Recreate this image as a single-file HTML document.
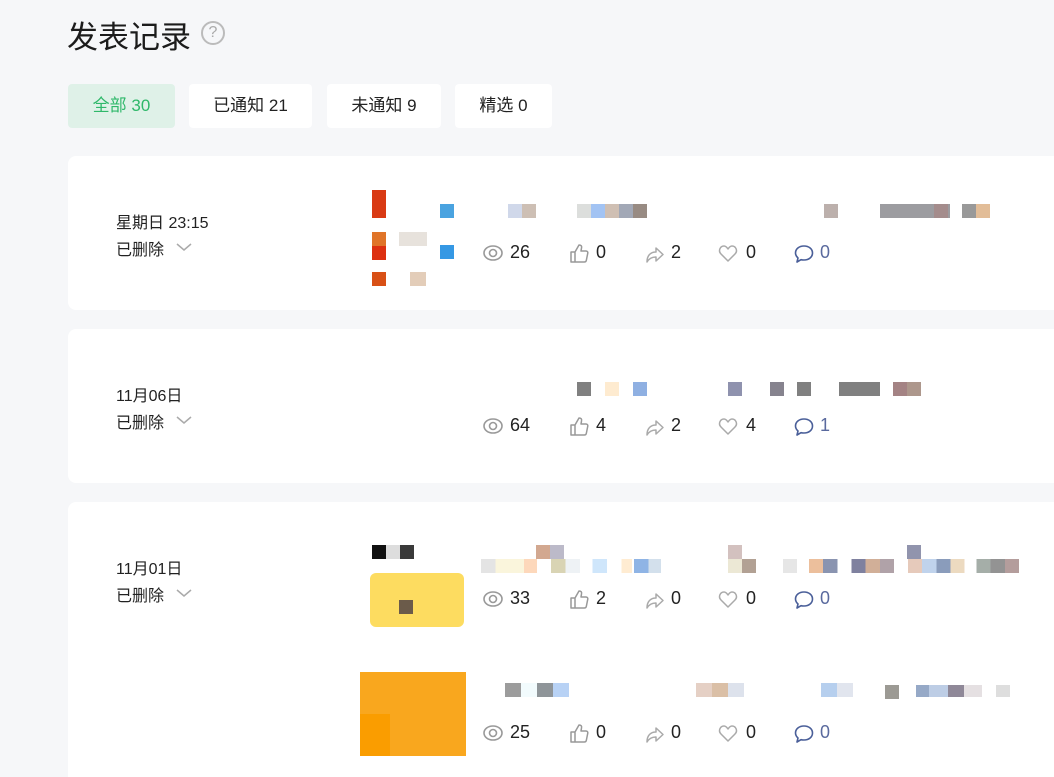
<!DOCTYPE html>
<html><head><meta charset="utf-8"><style>
*{margin:0;padding:0;box-sizing:border-box}
html,body{width:1054px;height:777px;overflow:hidden}
body{background:#f6f7f9;font-family:"Liberation Sans","Noto Sans CJK SC",sans-serif;color:#222;position:relative}
.a{position:absolute}
h1{position:absolute;left:67px;top:12px;font-size:31px;font-weight:400;color:#1c1c1c;letter-spacing:0px}
.q{position:absolute;left:201px;top:21px;width:24px;height:24px;border:2px solid #bbb;border-radius:50%;color:#aaa;font-size:16px;text-align:center;line-height:20px}
.tab{position:absolute;top:84px;height:44px;background:#fff;border-radius:4px;font-size:17px;text-align:center;line-height:44px;color:#222}
.card{position:absolute;left:68px;width:1000px;background:#fff;border-radius:8px}
.d{position:absolute;left:116px;font-size:16px;color:#222}
.del{position:absolute;left:116px;font-size:16px;color:#222}
.del svg{position:absolute;left:60px;top:6px}
.st{position:absolute;font-size:18px;color:#222}
.c{position:absolute;width:14px;height:14px}
</style></head><body>
<h1>发表记录</h1><div class="q">?</div>
<div class="tab" style="left:68px;width:107px;background:#dff1e8;color:#2fb86a">全部 30</div>
<div class="tab" style="left:189px;width:123px">已通知 21</div>
<div class="tab" style="left:327px;width:114px">未通知 9</div>
<div class="tab" style="left:455px;width:97px">精选 0</div>

<div class="card" style="top:156px;height:154px"></div>
<div class="card" style="top:329px;height:154px"></div>
<div class="card" style="top:502px;height:300px"></div>

<div class="d" style="top:209px">星期日 23:15</div>
<div class="del" style="top:236px">已删除<svg width="16" height="10"><path d="M1 2l7 6 7-6" fill="none" stroke="#aaa" stroke-width="1.5"/></svg></div>
<div class="d" style="top:382px">11月06日</div>
<div class="del" style="top:409px">已删除<svg width="16" height="10"><path d="M1 2l7 6 7-6" fill="none" stroke="#aaa" stroke-width="1.5"/></svg></div>
<div class="d" style="top:555px">11月01日</div>
<div class="del" style="top:582px">已删除<svg width="16" height="10"><path d="M1 2l7 6 7-6" fill="none" stroke="#aaa" stroke-width="1.5"/></svg></div>

<div class="a" style="left:372px;top:190px;width:14px;height:28px;background:#d93a14"></div>
<div class="a" style="left:372px;top:232px;width:14px;height:14px;background:#e07428"></div>
<div class="a" style="left:372px;top:246px;width:14px;height:14px;background:#dd3010"></div>
<div class="a" style="left:372px;top:272px;width:14px;height:14px;background:#d85016"></div>
<div class="a" style="left:440px;top:204px;width:14px;height:14px;background:#4aa3e0"></div>
<div class="a" style="left:440px;top:245px;width:14px;height:14px;background:#3598e4"></div>
<div class="a" style="left:399px;top:232px;width:28px;height:14px;background:#e7e2dc"></div>
<div class="a" style="left:410px;top:272px;width:16px;height:14px;background:#e3cdb9"></div>

<div class="a" style="left:372px;top:545px;width:14px;height:14px;background:#111"></div>
<div class="a" style="left:386px;top:545px;width:14px;height:14px;background:#ddd"></div>
<div class="a" style="left:400px;top:545px;width:14px;height:14px;background:#3a3a3a"></div>
<div class="a" style="left:370px;top:573px;width:94px;height:54px;background:#fddc60;border-radius:6px"></div>
<div class="a" style="left:399px;top:600px;width:14px;height:14px;background:#6b5b4a"></div>

<div class="a" style="left:360px;top:672px;width:106px;height:84px;background:#f9a71e"></div>
<div class="a" style="left:360px;top:714px;width:30px;height:42px;background:#fa9d00"></div>

<div class="c" style="left:508px;top:204px;background:#d0d8ea"></div>
<div class="c" style="left:522px;top:204px;background:#cdbfb4"></div>
<div class="c" style="left:577px;top:204px;background:#dcdedc"></div>
<div class="c" style="left:591px;top:204px;background:#a2c3f3"></div>
<div class="c" style="left:605px;top:204px;background:#cfbfb3"></div>
<div class="c" style="left:619px;top:204px;background:#a2a8b6"></div>
<div class="c" style="left:633px;top:204px;background:#988b83"></div>
<div class="c" style="left:824px;top:204px;background:#bcb0ac"></div>
<div class="a" style="left:880px;top:204px;width:70px;height:14px;background:#9c9ca0"></div>
<div class="c" style="left:934px;top:204px;background:#a48c8c"></div>
<div class="c" style="left:962px;top:204px;background:#999"></div>
<div class="c" style="left:976px;top:204px;background:#e2bd98"></div>

<div class="c" style="left:577px;top:382px;background:#808080"></div>
<div class="c" style="left:605px;top:382px;background:#feebd0"></div>
<div class="c" style="left:633px;top:382px;background:#8fb0e2"></div>
<div class="c" style="left:728px;top:382px;background:#8f92ae"></div>
<div class="c" style="left:770px;top:382px;background:#86838e"></div>
<div class="c" style="left:797px;top:382px;background:#808080"></div>
<div class="a" style="left:839px;top:382px;width:41px;height:14px;background:#808080"></div>
<div class="c" style="left:893px;top:382px;background:#a48384"></div>
<div class="c" style="left:907px;top:382px;background:#ad978c"></div>

<div class="c" style="left:536px;top:545px;background:#d2a890"></div>
<div class="c" style="left:550px;top:545px;background:#bcbac9"></div>
<div class="a" style="left:481px;top:559px;width:180px;height:14px;background:linear-gradient(90deg,#e4e4e4 8%,#faf5dc 8% 24%,#fdd8bb 24% 31%,#fff 31% 39%,#d9d4b4 39% 47%,#eef2f5 47% 55%,#fff 55% 62%,#cfe6fb 62% 70%,#fff 70% 78%,#ffecd2 78% 84%,#fff 84% 85%,#8fb4e5 85% 93%,#d3e0ec 93%)"></div>
<div class="c" style="left:728px;top:545px;background:#d3c1bf"></div>
<div class="c" style="left:728px;top:559px;background:#ece8d5"></div>
<div class="c" style="left:742px;top:559px;background:#b2a194"></div>
<div class="a" style="left:783px;top:559px;width:236px;height:14px;background:linear-gradient(90deg,#e6e6e6 6%,#fff 6% 11%,#ecbf9c 11% 17%,#8a94b0 17% 23%,#fff 23% 29%,#7f819f 29% 35%,#d1af98 35% 41%,#b0a2a8 41% 47%,#fff 47% 53%,#e6cabb 53% 59%,#c0d3ec 59% 65%,#8a9cbb 65% 71%,#ecdac0 71% 77%,#fff 77% 82%,#a5aea8 82% 88%,#939393 88% 94%,#b49d9c 94%)"></div>
<div class="c" style="left:907px;top:545px;background:#9194ad"></div>

<div class="a" style="left:505px;top:683px;width:64px;height:14px;background:linear-gradient(90deg,#9c9c9c 25%,#f2fbfd 25% 50%,#8f9599 50% 75%,#b8d2f5 75%)"></div>
<div class="a" style="left:696px;top:683px;width:64px;height:14px;background:linear-gradient(90deg,#e5d0c5 25%,#dabfa6 25% 50%,#dde2ec 50% 75%,#fff 75%)"></div>
<div class="a" style="left:821px;top:683px;width:32px;height:14px;background:linear-gradient(90deg,#b6cfee 50%,#e1e5ee 50%)"></div>
<div class="c" style="left:885px;top:685px;background:#9c9a94"></div>
<div class="a" style="left:916px;top:685px;width:94px;height:12px;background:linear-gradient(90deg,#96a9c7 14%,#bdcde5 14% 34%,#8f8898 34% 51%,#e5e0e2 51% 70%,#fff 70% 85%,#dedede 85%)"></div>

<svg width="0" height="0" style="position:absolute"><defs>
<g id="eye"><ellipse cx="10" cy="10" rx="9" ry="7" fill="none" stroke="#999" stroke-width="1.6"/><circle cx="10" cy="10" r="3.5" fill="none" stroke="#999" stroke-width="1.6"/></g>
<g id="like"><path d="M2 9h4v10H2zM6 9l4-7c2 0 3 1 2.5 3L12 8h5c1.2 0 2 1 1.8 2l-1.5 7.5c-.2 1-1 1.5-2 1.5H6" fill="none" stroke="#999" stroke-width="1.5" stroke-linejoin="round"/></g>
<g id="share"><path d="M3 19c0-7 4-10 9-10V5l7 6.5-7 6.5v-4c-4 0-7 1.5-9 5z" fill="none" stroke="#aaa" stroke-width="1.5" stroke-linejoin="round"/></g>
<g id="heart"><path d="M10 18L3 11C0 8 2 3 6 3c2 0 3 1.5 4 3 1-1.5 2-3 4-3 4 0 6 5 3 8z" fill="none" stroke="#aaa" stroke-width="1.5" stroke-linejoin="round"/></g>
<g id="cm"><path d="M10 3c5 0 8.5 3 8.5 7s-3.5 7-8.5 7c-1 0-2 0-3-.3L3 19l1-4C2.5 13.6 1.5 12 1.5 10 1.5 6 5 3 10 3z" fill="none" stroke="#4a5f99" stroke-width="1.6" stroke-linejoin="round"/></g>
</defs></svg>

<div id="rows"></div>
<script>
var rows=[[242,'26','0','2','0','0'],[415,'64','4','2','4','1'],[588,'33','2','0','0','0'],[722,'25','0','0','0','0']];
var h='';
rows.forEach(function(r){
 var y=r[0];
 var items=[[483,'eye',510,r[1]],[569,'like',596,r[2]],[644,'share',671,r[3]],[718,'heart',746,r[4]],[794,'cm',820,r[5]]];
 items.forEach(function(it){
  h+='<svg class="a" style="left:'+it[0]+'px;top:'+(y+1)+'px" width="21" height="21"><use href="#'+it[1]+'"/></svg>';
  h+='<div class="st" style="left:'+it[2]+'px;top:'+(y)+'px;'+(it[1]=='cm'?'color:#5a6a9e':'')+'">'+it[3]+'</div>';
 });
});
document.getElementById('rows').innerHTML=h;
</script>
</body></html>
